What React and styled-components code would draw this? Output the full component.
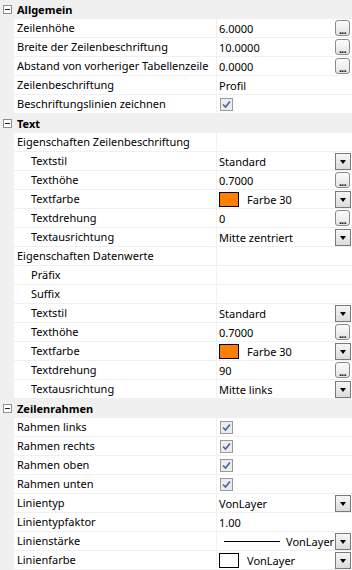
import React from 'react'
import styled, { createGlobalStyle } from 'styled-components'

const Global = createGlobalStyle`
  html, body { margin: 0; padding: 0; background: #f0f0f0; }
  body { font-family: "Noto Sans", "DejaVu Sans", sans-serif; font-size: 11px; color: #000; }
`

const Grid = styled.div`
  width: 352px;
  height: 570px;
  overflow: hidden;
  background: #f0f0f0;
`

const Row = styled.div`
  display: grid;
  grid-template-columns: 14px 203px 1fr;
  height: 19px;
  box-sizing: border-box;
  border-bottom: 1px solid #f0f0f0;
`

const Header = styled.div`
  display: flex;
  align-items: center;
  height: 19px;
  background: #f0f0f0;
  font-weight: bold;
`

const Toggle = styled.span`
  width: 9px;
  height: 9px;
  margin: 0 5px 0 3px;
  box-sizing: border-box;
  border: 1px solid #8f8f8f;
  background: #fff;
  display: flex;
  align-items: center;
  justify-content: center;
  &::after {
    content: '';
    width: 5px;
    height: 1px;
    background: #222;
  }
`

const Label = styled.div`
  background: #fff;
  border-right: 1px solid #f0f0f0;
  padding-left: ${p => (p.$indent ? 17 : 3)}px;
  line-height: 18px;
  white-space: nowrap;
  overflow: hidden;
`

const Value = styled.div`
  background: #fff;
  display: flex;
  align-items: center;
  padding-left: 2px;
  white-space: nowrap;
  overflow: hidden;
`

const ValueText = styled.span`
  flex: 1;
  padding-left: ${p => p.$pad || 0}px;
`

const Swatch = styled.span`
  width: 20px;
  height: 15px;
  box-sizing: border-box;
  border: 1px solid #000;
  background: ${p => p.$color};
  flex: none;
`

const DotsBtn = styled.span`
  width: 15px;
  height: 16px;
  margin-right: 2px;
  box-sizing: border-box;
  border: 1px solid #8a8a8a;
  border-radius: 3px;
  background: linear-gradient(#fcfcfc, #e4e4e4);
  display: flex;
  align-items: flex-end;
  justify-content: center;
  font-size: 10px;
  font-weight: bold;
  line-height: 9px;
  letter-spacing: -0.5px;
  flex: none;
`

const DropBtn = styled.span`
  width: 16px;
  height: 17px;
  margin-right: 1px;
  box-sizing: border-box;
  border: 1px solid #7a7a7a;
  background: linear-gradient(#f6f6f6, #dcdcdc);
  display: flex;
  align-items: center;
  justify-content: center;
  flex: none;
  &::after {
    content: '';
    margin-top: 1px;
    border-left: 3.5px solid transparent;
    border-right: 3.5px solid transparent;
    border-top: 4px solid #000;
  }
`

const Check = styled.span`
  width: 13px;
  height: 13px;
  margin-left: 1px;
  box-sizing: border-box;
  border: 1px solid #9a9a9a;
  background: #ececec;
  display: flex;
  align-items: center;
  justify-content: center;
`

const LineSample = styled.span`
  width: 56px;
  height: 1px;
  background: #000;
  margin: 0 6px 0 5px;
  flex: none;
`

const CheckMark = () => (
  <Check>
    <svg width="9" height="9" viewBox="0 0 9 9">
      <path d="M1 4.5 L3.5 7 L8 1.5" fill="none" stroke="#4a5fa8" strokeWidth="1.6" />
    </svg>
  </Check>
)

const renderValue = r => {
  switch (r.kind) {
    case 'dots':
      return <><ValueText>{r.value}</ValueText><DotsBtn>...</DotsBtn></>
    case 'drop':
      return <><ValueText>{r.value}</ValueText><DropBtn /></>
    case 'color':
      return <><Swatch $color={r.color} /><ValueText $pad={8}>{r.value}</ValueText><DropBtn /></>
    case 'check':
      return <CheckMark />
    case 'line':
      return <><LineSample /><ValueText>{r.value}</ValueText><DropBtn /></>
    default:
      return <ValueText>{r.value}</ValueText>
  }
}

const sections = [
  {
    title: 'Allgemein',
    rows: [
      { label: 'Zeilenhöhe', value: '6.0000', kind: 'dots' },
      { label: 'Breite der Zeilenbeschriftung', value: '10.0000', kind: 'dots' },
      { label: 'Abstand von vorheriger Tabellenzeile', value: '0.0000', kind: 'dots' },
      { label: 'Zeilenbeschriftung', value: 'Profil' },
      { label: 'Beschriftungslinien zeichnen', kind: 'check' },
    ],
  },
  {
    title: 'Text',
    rows: [
      { label: 'Eigenschaften Zeilenbeschriftung' },
      { label: 'Textstil', value: 'Standard', kind: 'drop', indent: true },
      { label: 'Texthöhe', value: '0.7000', kind: 'dots', indent: true },
      { label: 'Textfarbe', value: 'Farbe 30', kind: 'color', color: '#ff8000', indent: true },
      { label: 'Textdrehung', value: '0', kind: 'dots', indent: true },
      { label: 'Textausrichtung', value: 'Mitte zentriert', kind: 'drop', indent: true },
      { label: 'Eigenschaften Datenwerte' },
      { label: 'Präfix', indent: true },
      { label: 'Suffix', indent: true },
      { label: 'Textstil', value: 'Standard', kind: 'drop', indent: true },
      { label: 'Texthöhe', value: '0.7000', kind: 'dots', indent: true },
      { label: 'Textfarbe', value: 'Farbe 30', kind: 'color', color: '#ff8000', indent: true },
      { label: 'Textdrehung', value: '90', kind: 'dots', indent: true },
      { label: 'Textausrichtung', value: 'Mitte links', kind: 'drop', indent: true },
    ],
  },
  {
    title: 'Zeilenrahmen',
    rows: [
      { label: 'Rahmen links', kind: 'check' },
      { label: 'Rahmen rechts', kind: 'check' },
      { label: 'Rahmen oben', kind: 'check' },
      { label: 'Rahmen unten', kind: 'check' },
      { label: 'Linientyp', value: 'VonLayer', kind: 'drop' },
      { label: 'Linientypfaktor', value: '1.00' },
      { label: 'Linienstärke', value: 'VonLayer', kind: 'line' },
      { label: 'Linienfarbe', value: 'VonLayer', kind: 'color', color: '#fff' },
    ],
  },
]

export default function App() {
  return (
    <>
      <Global />
      <Grid>
        {sections.map(s => (
          <React.Fragment key={s.title}>
            <Header><Toggle />{s.title}</Header>
            {s.rows.map((r, i) => (
              <Row key={i}>
                <span />
                <Label $indent={r.indent}>{r.label}</Label>
                <Value>{renderValue(r)}</Value>
              </Row>
            ))}
          </React.Fragment>
        ))}
      </Grid>
    </>
  )
}
